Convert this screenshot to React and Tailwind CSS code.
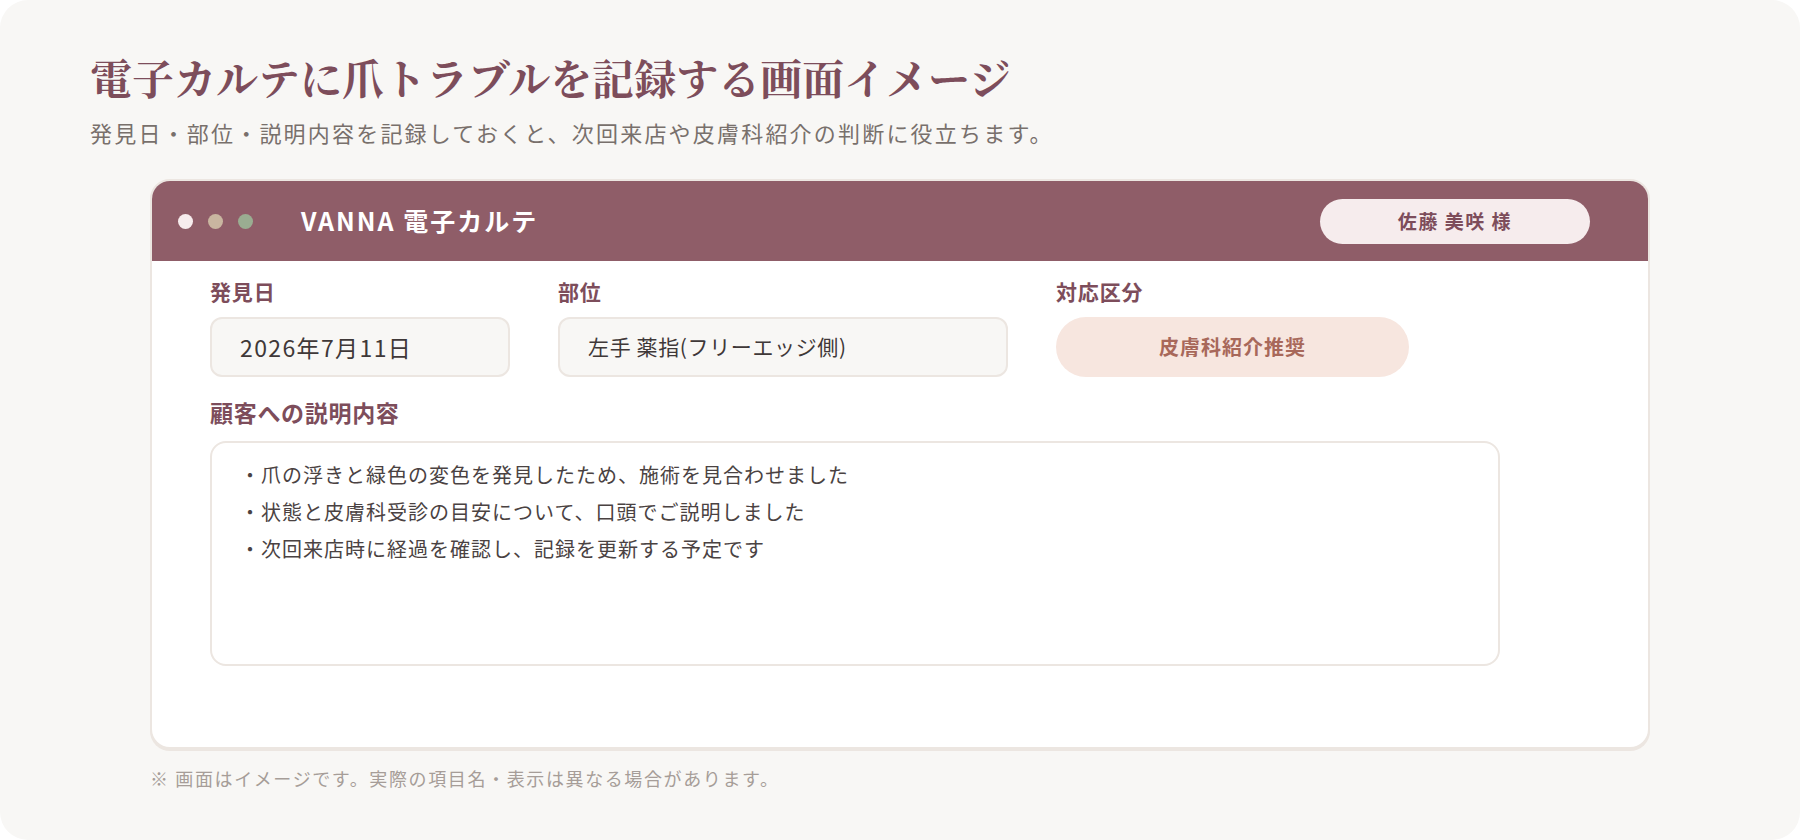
import React from 'react';

const sans = { fontFamily: '"Noto Sans CJK JP", "Noto Sans", sans-serif' };

export default function App() {
  const notes = [
    '・爪の浮きと緑色の変色を発見したため、施術を見合わせました',
    '・状態と皮膚科受診の目安について、口頭でご説明しました',
    '・次回来店時に経過を確認し、記録を更新する予定です',
  ];

  return (
    <div className="bg-white w-[1800px] h-[840px]">
      <div
        className="bg-[#f8f7f5] w-full h-full rounded-[28px] pt-[52px] font-['Noto_Sans_CJK_JP',sans-serif]"
        style={sans}
      >
        {/* heading */}
        <div className="pl-[90px]">
          <h1 className="font-['Noto_Serif_CJK_JP','Noto_Sans_CJK_JP',serif] text-[42px] leading-[50px] font-bold text-[#7d4d5b]">
            電子カルテに爪トラブルを記録する画面イメージ
          </h1>
          <p className="mt-[14px] text-[22px] leading-[32px] tracking-[0.1em] text-[#78706c]">
            発見日・部位・説明内容を記録しておくと、次回来店や皮膚科紹介の判断に役立ちます。
          </p>
        </div>

        {/* window */}
        <div className="mx-[150px] mt-[31px] h-[570px] rounded-[20px] border-2 border-[#ece6e1] bg-white overflow-hidden shadow-[0_2px_0_#ece6e1]">
          <div className="h-[80px] bg-[#8f5d68] flex items-center pl-[26px] pr-[58px]">
            <div className="flex items-center gap-[15px]">
              <span className="w-[15px] h-[15px] rounded-full bg-[#f7eced]" />
              <span className="w-[15px] h-[15px] rounded-full bg-[#c9b6a0]" />
              <span className="w-[15px] h-[15px] rounded-full bg-[#9aad91]" />
            </div>
            <div className="ml-[48px] text-[25px] font-semibold text-white tracking-[0.08em]">
              VANNA 電子カルテ
            </div>
            <div className="ml-auto w-[270px] h-[45px] rounded-full bg-[#f6eced] flex items-center justify-center text-[19px] font-bold text-[#7d4d5b] tracking-[0.08em]">
              佐藤 美咲 様
            </div>
          </div>

          <div className="pl-[58px] pt-[16px]">
            <div className="flex gap-[48px]">
              <div className="w-[300px]">
                <div className="text-[21px] leading-[28px] font-bold tracking-[0.04em] text-[#7d4d5b]">発見日</div>
                <div className="mt-[12px] h-[60px] rounded-[12px] border-2 border-[#ece6e1] bg-[#f8f7f5] flex items-center pl-[28px] text-[23px] tracking-[0.06em] text-[#3f3838]">
                  2026年7月11日
                </div>
              </div>
              <div className="w-[450px]">
                <div className="text-[21px] leading-[28px] font-bold tracking-[0.04em] text-[#7d4d5b]">部位</div>
                <div className="mt-[12px] h-[60px] rounded-[12px] border-2 border-[#ece6e1] bg-[#f8f7f5] flex items-center pl-[28px] text-[21px] tracking-[0.03em] text-[#3f3838]">
                  左手 薬指(フリーエッジ側)
                </div>
              </div>
              <div className="w-[353px]">
                <div className="text-[21px] leading-[28px] font-bold tracking-[0.04em] text-[#7d4d5b]">対応区分</div>
                <div className="mt-[12px] h-[60px] rounded-full bg-[#f7e6df] flex items-center justify-center text-[20px] font-bold tracking-[0.05em] text-[#a8685a]">
                  皮膚科紹介推奨
                </div>
              </div>
            </div>

            <div className="mt-[20px] text-[23px] leading-[30px] font-bold tracking-[0.03em] text-[#7d4d5b]">顧客への説明内容</div>
            <div className="mt-[14px] w-[1290px] h-[225px] rounded-[16px] border-2 border-[#ece6e1] bg-white pt-[13px] pl-[28px]">
              {notes.map((n) => (
                <div key={n} className="text-[20px] leading-[37px] tracking-[0.05em] text-[#4a4242]">
                  {n}
                </div>
              ))}
            </div>
          </div>
        </div>

        <p className="ml-[150px] mt-[16px] text-[18px] leading-[26px] tracking-[0.09em] text-[#a69d98]">
          ※ 画面はイメージです。実際の項目名・表示は異なる場合があります。
        </p>
      </div>
    </div>
  );
}
